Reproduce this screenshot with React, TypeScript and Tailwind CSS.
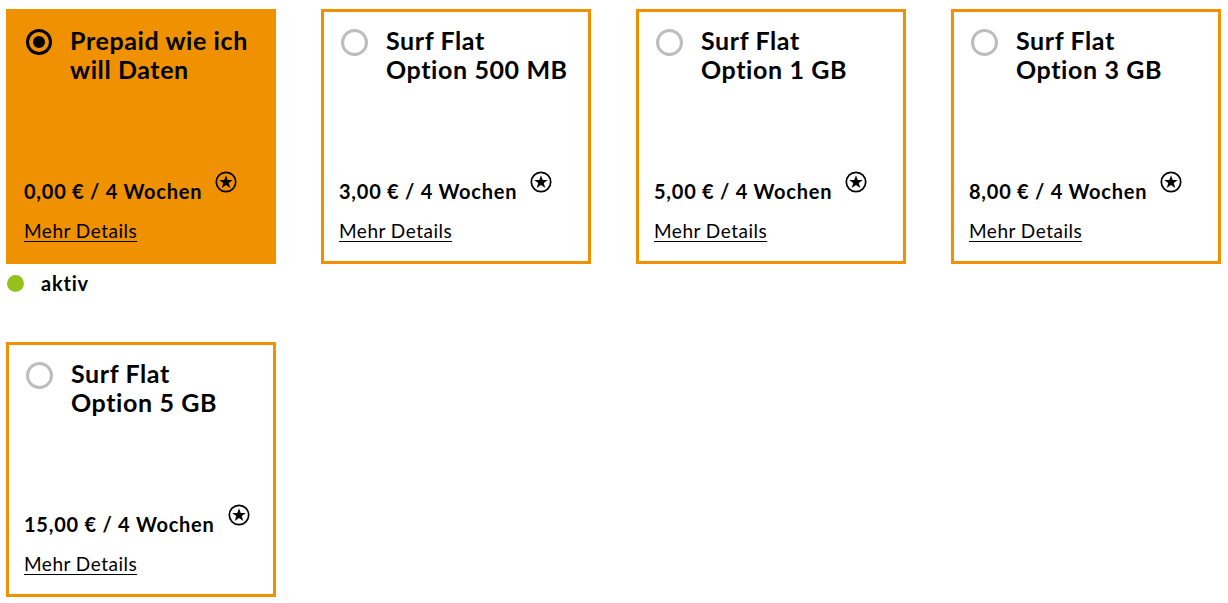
import { useState } from 'react';

type Plan = {
  id: string;
  title: string[];
  price: string;
};

const plans: Plan[] = [
  { id: 'prepaid', title: ['Prepaid wie ich', 'will Daten'], price: '0,00 € / 4 Wochen' },
  { id: 'surf500', title: ['Surf Flat', 'Option 500 MB'], price: '3,00 € / 4 Wochen' },
  { id: 'surf1', title: ['Surf Flat', 'Option 1 GB'], price: '5,00 € / 4 Wochen' },
  { id: 'surf3', title: ['Surf Flat', 'Option 3 GB'], price: '8,00 € / 4 Wochen' },
  { id: 'surf5', title: ['Surf Flat', 'Option 5 GB'], price: '15,00 € / 4 Wochen' },
];

function StarNote() {
  return (
    <svg width="22" height="22" viewBox="0 0 22 22" className="shrink-0">
      <circle cx="11" cy="11" r="9.7" fill="none" stroke="#000" strokeWidth="1.7" />
      <path
        d="M11 4.2 L12.7 9 L17.8 9.05 L13.75 12.1 L15.25 17 L11 14.05 L6.75 17 L8.25 12.1 L4.2 9.05 L9.3 9 Z"
        fill="#000"
      />
    </svg>
  );
}

function Radio({ checked }: { checked: boolean }) {
  if (checked) {
    return (
      <span className="flex h-[26px] w-[26px] shrink-0 items-center justify-center rounded-full border-[3px] border-black">
        <span className="h-[12px] w-[12px] rounded-full bg-black" />
      </span>
    );
  }
  return <span className="h-[27px] w-[27px] shrink-0 rounded-full border-[3px] border-[#bdbdbd] bg-white" />;
}

function PlanCard({ plan, active, onSelect }: { plan: Plan; active: boolean; onSelect: () => void }) {
  return (
    <div
      onClick={onSelect}
      className={`flex h-[255px] w-[270px] cursor-pointer flex-col justify-between border-[3px] border-[#ef9100] pl-[15px] pr-2 pb-[18px] pt-[17px] ${
        active ? 'bg-[#ef9100]' : 'bg-white'
      }`}
    >
      <div className="flex items-start gap-[18px] pl-[2px]">
        <Radio checked={active} />
        <div className="-mt-[3px] text-[25px] font-bold leading-[29px] tracking-[0.6px] whitespace-nowrap text-black">
          {plan.title.map((line) => (
            <div key={line}>{line}</div>
          ))}
        </div>
      </div>
      <div className="flex flex-col gap-[16px]">
        <div className="flex items-start gap-[13px]">
          <span className="pt-[8px] text-[20px] font-bold leading-[24px] tracking-[0.75px] whitespace-nowrap text-black">
            {plan.price}
          </span>
          <StarNote />
        </div>
        <a
          href="#"
          className="w-fit text-[19px] leading-[24px] tracking-[0.5px] text-black underline underline-offset-[3px]"
        >
          Mehr Details
        </a>
      </div>
    </div>
  );
}

export default function App() {
  const [selected, setSelected] = useState('prepaid');

  return (
    <div className="bg-white pl-[6px] pt-[9px]" style={{ fontFamily: 'Lato, "Noto Sans", sans-serif' }}>
      <div className="grid grid-cols-[270px_270px_270px_270px] grid-rows-[333px_auto] gap-x-[45px]">
        {plans.map((plan) => (
          <div key={plan.id}>
            <PlanCard plan={plan} active={selected === plan.id} onSelect={() => setSelected(plan.id)} />
            {plan.id === 'prepaid' && (
              <div className="mt-[9px] flex items-center gap-[17px] pl-[1px]">
                <span className="h-[17px] w-[17px] rounded-full bg-[#95c11f]" />
                <span className="text-[20px] font-bold leading-[20px] tracking-[0.8px] text-black">aktiv</span>
              </div>
            )}
          </div>
        ))}
      </div>
    </div>
  );
}
